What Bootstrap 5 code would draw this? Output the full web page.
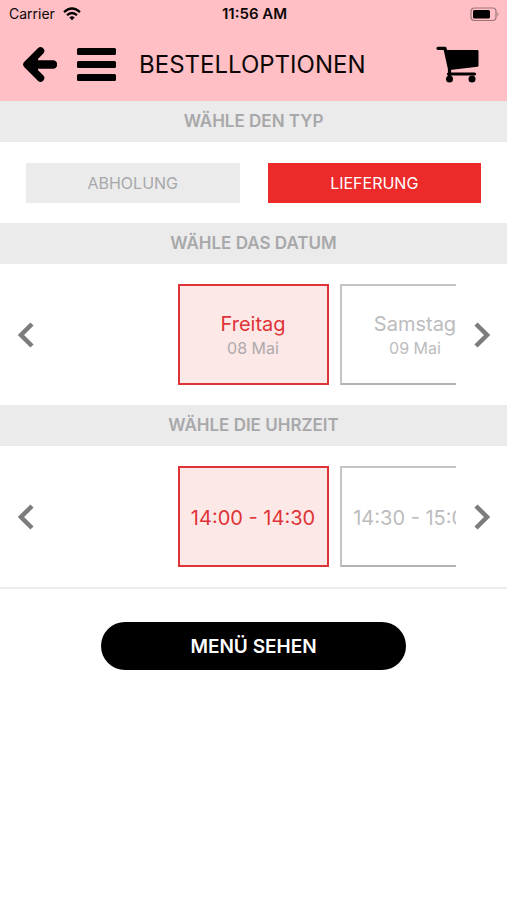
<!DOCTYPE html>
<html lang="de">
<head>
<meta charset="utf-8">
<meta name="viewport" content="width=device-width, initial-scale=1">
<title>Bestelloptionen</title>
<link href="https://cdn.jsdelivr.net/npm/bootstrap@5.3.0/dist/css/bootstrap.min.css" rel="stylesheet">
<style>
  body { font-family: Inter, "Liberation Sans", sans-serif; color: #0d0606; }
  svg { display: block; }
  .app-header { background: #ffbfc5; }
  .status-bar { height: 28px; padding: 0 7px 0 9px; font-size: 14px; line-height: 28px; }
  .status-time { font-size: 15px; }
  .title-bar { height: 73px; padding: 0 27px 0 22px; }
  .title-bar h1 { font-size: 24px; line-height: 32px; font-weight: 400; margin-left: 18px; }
  .icon-btn { color: #000; }
  .section-head { background: #ebebeb; color: #a8a8aa; font-size: 17px; line-height: 41px; font-weight: 600; }
  .type-row { padding: 21px 26px 20px; gap: 28px; }
  .type-btn { height: 40px; padding: 0; border: 0; border-radius: 0; font-size: 16px; line-height: 40px; background: #ebebeb; color: #a8a8aa; }
  .type-btn.selected { background: #ec2a2a; color: #fff; }
  .slot-row { padding: 20px 0; }
  .arrow-btn { width: 51px; height: 101px; color: #7c7c7c; }
  .slot-track { gap: 11px; padding-left: calc(50% - 76px); }
  .slot { width: 151px; height: 101px; border: 2px solid #c4c4c4; border-bottom-color: #b4b4b4; background: #fff; color: #bcbcbe; font-size: 20px; line-height: 24px; white-space: nowrap; padding: 2px 0 0; }
  .slot small { font-size: 16px; line-height: 24px; color: #bcbcbe; }
  .slot.selected { border-color: #df3437; background: #fde8e8; color: #df3437; }
  .slot.selected small { color: #aeaaac; }
  .slots-end { border-bottom: 2px solid #ececec; }
  .menu-btn { width: 60%; height: 48px; padding: 2px 0 0; background: #000; color: #fff; font-size: 19px; line-height: 24px; font-weight: 600; margin-top: 33px; }
  .menu-btn:hover { background: #222; color: #fff; }
</style>
</head>
<body class="bg-white">
<header class="app-header">
  <div class="status-bar row g-0 align-items-center">
    <div class="col d-flex align-items-center gap-2">
      <span>Carrier</span>
      <svg width="18" height="14" viewBox="0 0 18 14" fill="none" stroke="#000" stroke-width="2.2" aria-hidden="true"><path d="M1 5.1Q9-2.1 17 5.1M4 8.2Q9 3.8 14 8.2"/><path d="M6.4 10.4Q9 8.2 11.6 10.4L9 13.2z" fill="#000" stroke="none"/></svg>
    </div>
    <div class="status-time col-auto fw-semibold">11:56 AM</div>
    <div class="col d-flex justify-content-end">
      <svg width="30" height="15" viewBox="0 0 30 15" aria-hidden="true"><rect x="1" y="1" width="25" height="12.5" rx="3.5" fill="none" stroke="#9c7478" stroke-width="1.2"/><rect x="3" y="3" width="17" height="8.5" rx="1.5"/><path d="M27.5 5q2 2.200 0 4.500z" fill="#9c7478"/></svg>
    </div>
  </div>
  <nav class="title-bar d-flex align-items-center">
    <button type="button" class="icon-btn btn p-0 border-0" aria-label="Zurück">
      <svg width="35" height="37" viewBox="0 0 35 37" fill="none" stroke="#000" stroke-linejoin="round" stroke-linecap="round"><path d="M18.500 5 5 18.500l13.500 13.500" stroke-width="7.500"/><path d="M8 18.500H31" stroke-width="8.500"/><path d="M16 8v21L4 18.500z" fill="#000" stroke="none"/></svg>
    </button>
    <button type="button" class="icon-btn btn p-0 border-0 ms-3" aria-label="Menü">
      <svg width="48" height="34" viewBox="0 0 48 34"><rect x="4" width="39" height="7" rx="1.5"/><rect x="4" y="13" width="39" height="7" rx="1.5"/><rect x="4" y="26" width="39" height="7" rx="1.5"/></svg>
    </button>
    <h1 class="mb-0">BESTELLOPTIONEN</h1>
    <button type="button" class="icon-btn btn p-0 border-0 ms-auto" aria-label="Warenkorb">
      <svg width="44" height="37" viewBox="0 0 44 37"><path d="M2 2.300h7L13.500 23V29" fill="none" stroke="#000" stroke-width="3.200" stroke-linecap="round" stroke-linejoin="round"/><path d="M9 4H41.500q1 0 1 1V19.500q0 1-1 1.200L14 24z"/><path d="M12.500 28H38.500" stroke="#000" stroke-width="3.200" stroke-linecap="round"/><circle cx="13.500" cy="33" r="3.500"/><circle cx="36" cy="33" r="3.500"/></svg>
    </button>
  </nav>
</header>
<main>
  <section aria-labelledby="type-title">
    <h2 id="type-title" class="section-head text-center mb-0">WÄHLE DEN TYP</h2>
    <div class="type-row d-flex">
      <button type="button" class="type-btn btn flex-fill w-50" aria-pressed="false">ABHOLUNG</button>
      <button type="button" class="type-btn selected btn flex-fill w-50" aria-pressed="true">LIEFERUNG</button>
    </div>
  </section>
  <section aria-labelledby="date-title">
    <h2 id="date-title" class="section-head text-center mb-0">WÄHLE DAS DATUM</h2>
    <div class="slot-row d-flex align-items-center">
      <button type="button" class="arrow-btn btn p-0 border-0 rounded-0 flex-shrink-0 d-flex align-items-center justify-content-center" aria-label="Früheres Datum">
        <svg width="16" height="26" viewBox="0 0 16 26" fill="none" stroke="currentColor" stroke-width="4.500"><path d="M14 2 3 13 14 24"/></svg>
      </button>
      <div class="flex-grow-1 overflow-hidden">
        <div class="slot-track d-flex">
          <button type="button" class="slot selected flex-shrink-0" aria-pressed="true">Freitag<small class="d-block">08 Mai</small></button>
          <button type="button" class="slot flex-shrink-0" aria-pressed="false">Samstag<small class="d-block">09 Mai</small></button>
        </div>
      </div>
      <button type="button" class="arrow-btn btn p-0 border-0 rounded-0 flex-shrink-0 d-flex align-items-center justify-content-center" aria-label="Späteres Datum">
        <svg width="16" height="26" viewBox="0 0 16 26" fill="none" stroke="currentColor" stroke-width="4.500"><path d="M2 2 13 13 2 24"/></svg>
      </button>
    </div>
  </section>
  <section class="slots-end" aria-labelledby="time-title">
    <h2 id="time-title" class="section-head text-center mb-0">WÄHLE DIE UHRZEIT</h2>
    <div class="slot-row d-flex align-items-center">
      <button type="button" class="arrow-btn btn p-0 border-0 rounded-0 flex-shrink-0 d-flex align-items-center justify-content-center" aria-label="Frühere Uhrzeit">
        <svg width="16" height="26" viewBox="0 0 16 26" fill="none" stroke="currentColor" stroke-width="4.500"><path d="M14 2 3 13 14 24"/></svg>
      </button>
      <div class="flex-grow-1 overflow-hidden">
        <div class="slot-track d-flex">
          <button type="button" class="slot selected flex-shrink-0" aria-pressed="true">14:00 - 14:30</button>
          <button type="button" class="slot flex-shrink-0" aria-pressed="false">14:30 - 15:00</button>
        </div>
      </div>
      <button type="button" class="arrow-btn btn p-0 border-0 rounded-0 flex-shrink-0 d-flex align-items-center justify-content-center" aria-label="Spätere Uhrzeit">
        <svg width="16" height="26" viewBox="0 0 16 26" fill="none" stroke="currentColor" stroke-width="4.500"><path d="M2 2 13 13 2 24"/></svg>
      </button>
    </div>
  </section>
  <div class="text-center">
    <button type="button" class="menu-btn btn rounded-pill border-0">MENÜ SEHEN</button>
  </div>
</main>
<script src="https://cdn.jsdelivr.net/npm/bootstrap@5.3.0/dist/js/bootstrap.bundle.min.js"></script>
</body>
</html>
